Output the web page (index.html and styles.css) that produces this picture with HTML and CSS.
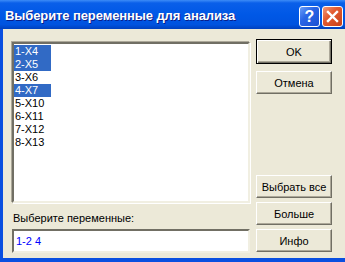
FILE: index.html
```
<!DOCTYPE html>
<html lang="ru">

<head>
    <meta charset="UTF-8">
    <title>Выберите переменные для анализа</title>
    <link rel="stylesheet" href="styles.css">
</head>

<body>
    <div class="window">
        <div class="titlebar">
            <span class="title">Выберите переменные для анализа</span>
            <div class="title-buttons">
                <span class="tb-btn tb-help">?</span>
                <span class="tb-btn tb-close">
                    <svg width="13" height="13" viewBox="0 0 13 13">
                        <path d="M2 2 L11 11 M11 2 L2 11" stroke="#fff" stroke-width="2.4" stroke-linecap="square" />
                    </svg>
                </span>
            </div>
        </div>

        <div class="client">
            <!-- left side: list and input -->
            <div class="left">
                <div class="listbox">
                    <div class="item selected">1-X4</div>
                    <div class="item selected">2-X5</div>
                    <div class="item">3-X6</div>
                    <div class="item selected">4-X7</div>
                    <div class="item">5-X10</div>
                    <div class="item">6-X11</div>
                    <div class="item">7-X12</div>
                    <div class="item">8-X13</div>
                </div>
                <label class="field-label" for="vars">Выберите переменные:</label>
                <div class="edit" id="vars">1-2 4</div>
            </div>

            <!-- right side: buttons -->
            <div class="right">
                <div class="top-buttons">
                    <button class="btn btn-default">OK</button>
                    <button class="btn">Отмена</button>
                </div>
                <div class="bottom-buttons">
                    <button class="btn">Выбрать все</button>
                    <button class="btn">Больше</button>
                    <button class="btn">Инфо</button>
                </div>
            </div>
        </div>
    </div>
</body>

</html>
```

FILE: styles.css
```
/* General */
body {
    margin: 0;
    padding: 0;
    font-family: 'Liberation Sans', Arial, sans-serif;
    font-size: 11px;
    color: #000;
    background: #ece9d8;
}

.window {
    width: 345px;
    height: 262px;
    display: flex;
    flex-direction: column;
    overflow: hidden;
}

/* Title bar */
.titlebar {
    height: 29px;
    flex: none;
    display: flex;
    align-items: center;
    justify-content: space-between;
    background: linear-gradient(to bottom, #3d8cf7 0, #0a5fe9 3px, #0058e6 50%, #0053df 85%, #0040bd 100%);
}

.title {
    margin-left: 5px;
    margin-top: 2px;
    color: #fff;
    font-weight: bold;
    font-size: 13px;
    letter-spacing: -0.1px;
    text-shadow: 1px 1px 0 #0a1e8a;
}

.title-buttons {
    display: flex;
    gap: 2px;
    margin-right: 2px;
    margin-top: 4px;
}

.tb-btn {
    width: 19px;
    height: 19px;
    border: 1px solid #fff;
    border-radius: 3px;
    display: flex;
    align-items: center;
    justify-content: center;
    color: #fff;
    font-weight: bold;
    font-size: 16px;
}

.tb-help {
    background: linear-gradient(135deg, #6a9ef8 0, #2a66e6 40%, #1c50d2 100%);
}

.tb-close {
    background: linear-gradient(135deg, #f39a7a 0, #e25a30 40%, #c8401a 100%);
}

/* Client area */
.client {
    flex: 1;
    display: flex;
    border-left: 3px solid #0a4fe0;
    border-bottom: 4px solid #0a4fe0;
    background: #ece9d8;
}

.left {
    margin-left: 9px;
    padding-top: 13px;
    width: 238px;
    display: flex;
    flex-direction: column;
}

.listbox {
    height: 156px;
    background: #fff;
    border: 2px solid;
    border-color: #716f64 #f1efe2 #f1efe2 #716f64;
    box-shadow: -1px -1px 0 #aca899, 1px 1px 0 #fff;
    padding-top: 1px;
    box-sizing: content-box;
    width: 234px;
}

.item {
    width: 36px;
    height: 13px;
    line-height: 13px;
    padding-left: 1px;
    white-space: nowrap;
}

.item.selected {
    background: #316ac5;
    color: #fff;
}

.field-label {
    margin-top: 9px;
    height: 13px;
    line-height: 13px;
    margin-left: 1px;
}

.edit {
    margin-top: 4px;
    height: 20px;
    line-height: 20px;
    background: #fff;
    border: 2px solid;
    border-color: #716f64 #f1efe2 #f1efe2 #716f64;
    padding-left: 2px;
    color: #0000ff;
}

.right {
    margin-left: 6px;
    padding-top: 10px;
    display: flex;
    flex-direction: column;
    justify-content: space-between;
    padding-bottom: 6px;
}

.top-buttons,
.bottom-buttons {
    display: flex;
    flex-direction: column;
}

.top-buttons {
    gap: 7px;
}

.bottom-buttons {
    gap: 4px;
}

.btn {
    width: 76px;
    height: 23px;
    padding: 0;
    margin: 0;
    font-family: 'Liberation Sans', Arial, sans-serif;
    font-size: 11px;
    color: #000;
    background: #ece9d8;
    border: 1px solid;
    border-color: #fff #716f64 #716f64 #fff;
    box-shadow: inset -1px -1px 0 #aca899;
}

.btn-default {
    border: 1px solid #000;
    box-shadow: inset 1px 1px 0 #fff, inset -1px -1px 0 #716f64, inset -2px -2px 0 #aca899;
    height: 25px;
}
```
